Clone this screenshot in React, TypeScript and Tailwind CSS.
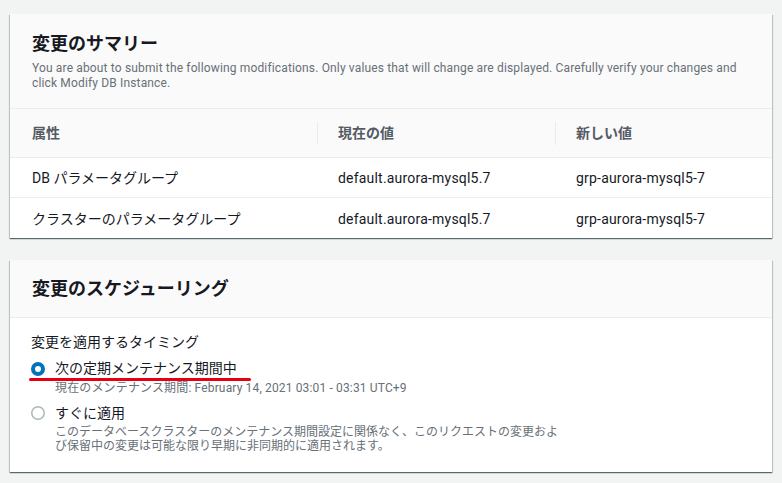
import React from "react";

const font = { fontFamily: "Roboto, 'Noto Sans CJK JP', sans-serif" };

function RadioOn() {
  return (
    <svg width="14" height="14" viewBox="0 0 14 14" className="shrink-0">
      <circle cx="7" cy="7" r="5" fill="#ffffff" stroke="#0073bb" strokeWidth="4" />
    </svg>
  );
}

function RadioOff() {
  return (
    <svg width="14" height="14" viewBox="0 0 14 14" className="shrink-0">
      <circle cx="7" cy="7" r="6.25" fill="#ffffff" stroke="#aab7b8" strokeWidth="1.5" />
    </svg>
  );
}

const rows = [
  ["DB パラメータグループ", "default.aurora-mysql5.7", "grp-aurora-mysql5-7"],
  ["クラスターのパラメータグループ", "default.aurora-mysql5.7", "grp-aurora-mysql5-7"],
];

const shadow =
  "shadow-[0_1px_1px_0_rgba(0,28,36,0.5),1px_1px_1px_0_rgba(0,28,36,0.15),-1px_1px_1px_0_rgba(0,28,36,0.15)]";

export default function App() {
  return (
    <div
      className="w-[782px] h-[483px] bg-[#f2f3f3] pl-[10px] pr-[10px] pt-[14px] text-[#16191f]"
      style={font}
    >
      {/* Card 1 */}
      <div className={`w-[762px] bg-white ${shadow}`}>
        <div className="bg-[#fafafa] border-b border-[#eaeded] px-[22px] pt-[19px] pb-[17px]">
          <h2 className="text-[18px] leading-[22px] font-bold">変更のサマリー</h2>
          <p className="mt-[6px] text-[12px] leading-[15px] text-[#687078] tracking-[0.15px]">
            You are about to submit the following modifications. Only values that will change are displayed. Carefully verify your changes and click Modify DB Instance.
          </p>
        </div>
        <div className="grid grid-cols-[307px_238px_1fr]">
          <div className="h-[49px] bg-[#fafafa] border-b border-[#eaeded] flex items-center pl-[22px] text-[14px] font-bold text-[#545b64]">
            属性
          </div>
          <div className="h-[49px] bg-[#fafafa] border-b border-[#eaeded] flex items-center text-[14px] font-bold text-[#545b64]">
            <span className="w-px h-[23px] bg-[#eaeded] mr-[20px]" />
            現在の値
          </div>
          <div className="h-[49px] bg-[#fafafa] border-b border-[#eaeded] flex items-center text-[14px] font-bold text-[#545b64]">
            <span className="w-px h-[23px] bg-[#eaeded] mr-[20px]" />
            新しい値
          </div>
          {rows.map((r, i) => (
            <React.Fragment key={i}>
              <div className={`h-[40px] flex items-center pl-[22px] pt-[2px] text-[14px] ${i === 0 ? "border-b border-[#eaeded]" : ""}`}>
                {r[0]}
              </div>
              <div className={`h-[40px] flex items-center pl-[21px] pt-[2px] text-[14px] tracking-[0.2px] ${i === 0 ? "border-b border-[#eaeded]" : ""}`}>
                {r[1]}
              </div>
              <div className={`h-[40px] flex items-center pl-[21px] pt-[2px] text-[14px] tracking-[0.2px] ${i === 0 ? "border-b border-[#eaeded]" : ""}`}>
                {r[2]}
              </div>
            </React.Fragment>
          ))}
        </div>
      </div>

      {/* Card 2 */}
      <div className={`mt-[22px] w-[762px] bg-white ${shadow}`}>
        <div className="bg-[#fafafa] border-b border-[#eaeded] h-[58px] flex items-center px-[22px] pt-[1px]">
          <h2 className="text-[18px] leading-[22px] font-bold">変更のスケジューリング</h2>
        </div>
        <div className="px-[21px] pt-[14px] pb-[19px]">
          <div className="text-[14px] leading-[20px]">変更を適用するタイミング</div>
          <div className="relative mt-[6px] flex gap-[10px]">
            <div className="pt-[4px]">
              <RadioOn />
            </div>
            <div>
              <div className="text-[14px] leading-[20px]">次の定期メンテナンス期間中</div>
              <div className="mt-[2px] text-[12px] leading-[16px] text-[#687078] tracking-[0.15px]">
                現在のメンテナンス期間: February 14, 2021 03:01 - 03:31 UTC+9
              </div>
            </div>
            <span className="absolute left-[-2px] top-[20px] w-[222px] h-[2.5px] rounded-full bg-[#e60012]" />
          </div>
          <div className="mt-[7px] flex gap-[10px]">
            <div className="pt-[3px]">
              <RadioOff />
            </div>
            <div>
              <div className="text-[14px] leading-[20px]">すぐに適用</div>
              <div className="mt-[2px] text-[12px] leading-[14px] text-[#687078]">
                このデータベースクラスターのメンテナンス期間設定に関係なく、このリクエストの変更およ
                <br />
                び保留中の変更は可能な限り早期に非同期的に適用されます。
              </div>
            </div>
          </div>
        </div>
      </div>
    </div>
  );
}
